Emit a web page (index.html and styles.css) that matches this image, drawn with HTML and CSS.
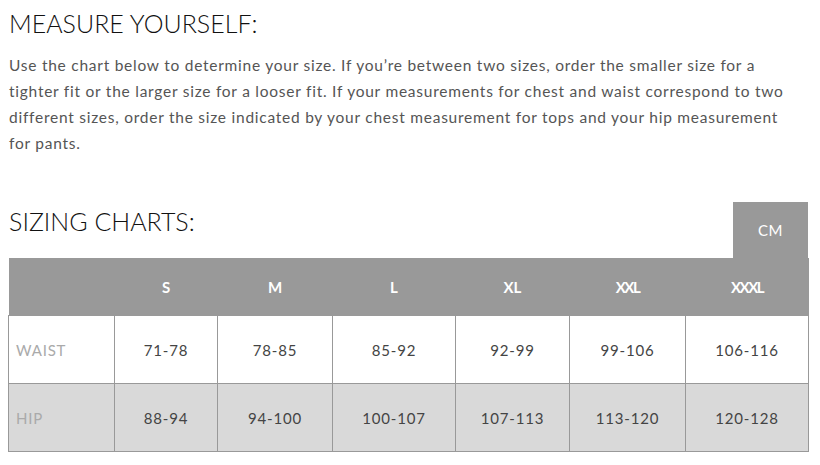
FILE: index.html
```html
<!DOCTYPE html>
<html>
<head>
<meta charset="utf-8">
<link rel="stylesheet" href="styles.css">
</head>
<body>
<h1 class="title">MEASURE YOURSELF:</h1>
<p class="intro">Use the chart below to determine your size. If you’re between two sizes, order the smaller size for a tighter fit or the larger size for a looser fit. If your measurements for chest and waist correspond to two different sizes, order the size indicated by your chest measurement for tops and your hip measurement for pants.</p>
<div class="chart-head">
  <h2 class="title">SIZING CHARTS:</h2>
  <div class="unit-tab">CM</div>
</div>
<table class="chart">
  <colgroup>
    <col class="c0"><col class="c1"><col class="c2"><col class="c3"><col class="c4"><col class="c5"><col class="c6">
  </colgroup>
  <thead>
    <tr><th></th><th>S</th><th>M</th><th>L</th><th>XL</th><th class="tight">XXL</th><th class="tight">XXXL</th></tr>
  </thead>
  <tbody>
    <tr class="waist"><td class="label">WAIST</td><td>71-78</td><td>78-85</td><td>85-92</td><td>92-99</td><td>99-106</td><td>106-116</td></tr>
    <tr class="hip"><td class="label">HIP</td><td>88-94</td><td>94-100</td><td>100-107</td><td>107-113</td><td>113-120</td><td>120-128</td></tr>
  </tbody>
</table>
</body>
</html>
```
FILE: styles.css
```css
body {
  margin: 8px;
  background: #fff;
  font-family: "Lato", "Liberation Sans", sans-serif;
  color: #222;
}
.title {
  font-family: "Lato", sans-serif;
  font-weight: 300;
  font-size: 25px;
  line-height: 30px;
  margin: 0;
  padding-left: 1px;
  color: #111;
}
h1.title { margin-top: 0; }
.intro {
  margin: 14px 0 0 1px;
  font-size: 15.5px;
  line-height: 26px;
  color: #555;
  letter-spacing: 0.75px;
  width: 795px;
}
.chart-head {
  display: flex;
  justify-content: space-between;
  align-items: flex-end;
  margin-top: 46px;
  width: 800px;
}
.chart-head .title { margin-bottom: 22px; }
.unit-tab {
  width: 75px;
  height: 56px;
  background: #999;
  color: #fff;
  font-size: 15px;
  display: flex;
  align-items: center;
  justify-content: center;
  letter-spacing: 0.5px;
}
.chart {
  border-collapse: collapse;
  width: 800px;
  table-layout: fixed;
}
.c0 { width: 106px; }
.c1 { width: 103px; }
.c2 { width: 115px; }
.c3 { width: 123px; }
.c4 { width: 114px; }
.c5 { width: 116px; }
.c6 { width: 123px; }
.chart th {
  background: #999;
  color: #fff;
  font-weight: 700;
  font-size: 15px;
  height: 57px;
  padding: 0;
  text-align: center;
}
.chart th.tight { letter-spacing: -1.5px; }
.chart td {
  border: 1px solid #999;
  height: 67px;
  padding: 0;
  text-align: center;
  font-size: 15px;
  color: #444;
  letter-spacing: 0.8px;
}
.chart td.label {
  text-align: left;
  padding-left: 7px;
  color: #aaa;
}
.hip td { background: #d9d9d9; }
```
